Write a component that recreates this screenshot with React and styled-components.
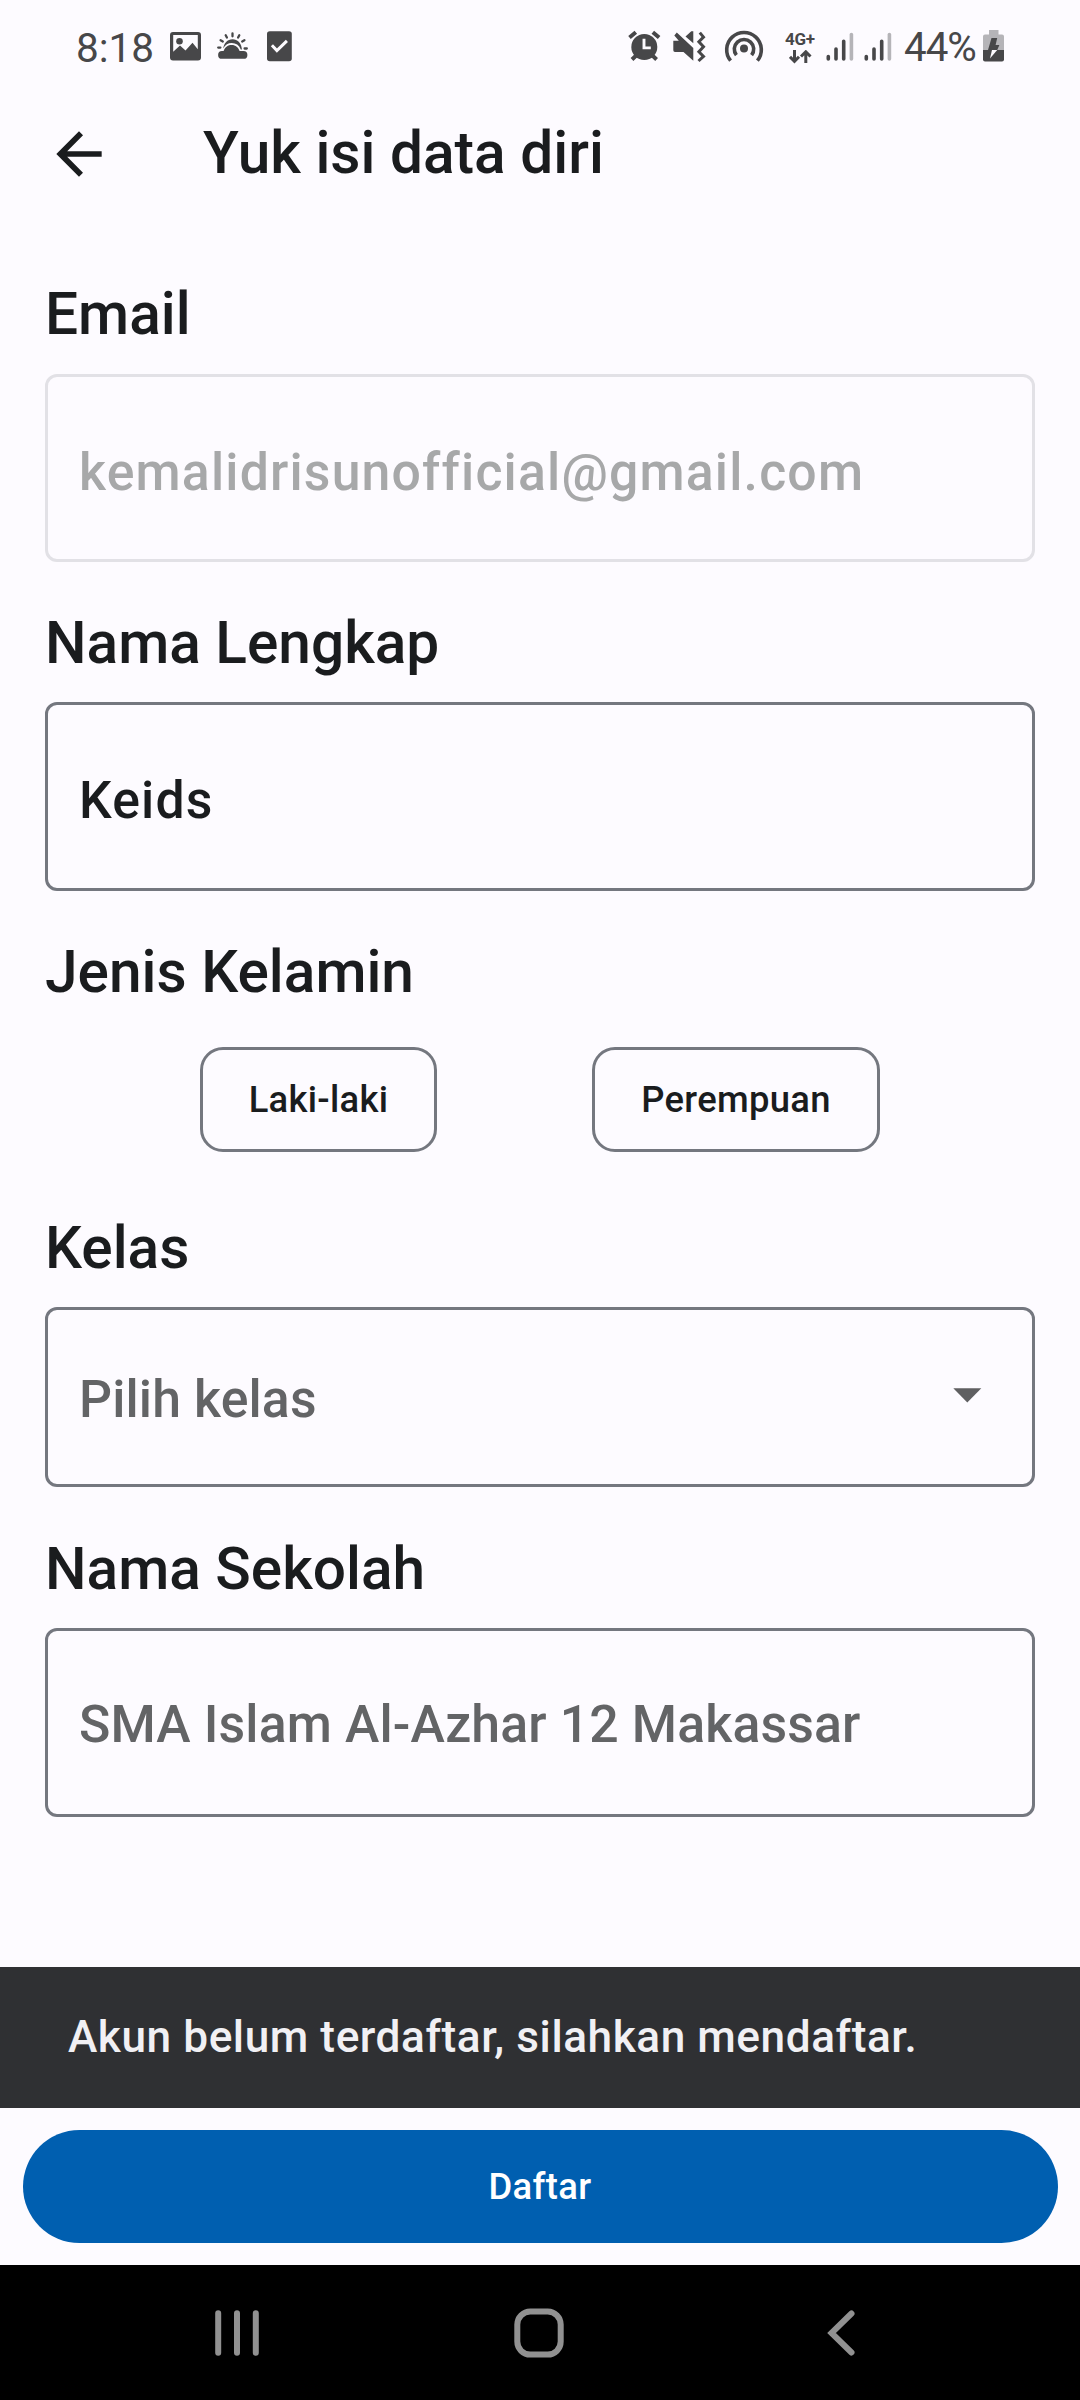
import React from "react";
import styled, { createGlobalStyle } from "styled-components";

const ink = "#1a1c1e";
const outline = "#74777f";
const statusInk = "#474749";

const GlobalStyle = createGlobalStyle`
  html, body { margin: 0; padding: 0; background: #fdfbff; }
  * { box-sizing: border-box; }
`;

const Screen = styled.div`
  width: 1080px;
  height: 2400px;
  display: flex;
  flex-direction: column;
  overflow: hidden;
  background: #fdfbff;
  color: ${ink};
  font-family: Roboto, "Liberation Sans", sans-serif;
  font-weight: 500;
`;

const StatusBar = styled.header`
  height: 92px;
  padding: 0 75px 0 76px;
  display: flex;
  justify-content: space-between;
  color: ${statusInk};
  font-weight: 400;
`;

const StatusGroup = styled.div`
  display: flex;
  align-items: flex-start;
`;

const StatusText = styled.span`
  width: ${(p) => p.$width}px;
  margin-left: ${(p) => p.$gap || 0}px;
  padding-top: 25px;
  font-size: ${(p) => p.$size}px;
  line-height: 46px;
  white-space: nowrap;
  letter-spacing: ${(p) => p.$spacing || 0}px;
`;

const StatusIcon = styled.svg`
  flex: none;
  display: block;
  height: 40px;
  margin-top: 26px;
  margin-left: ${(p) => p.$gap || 0}px;
`;

const Network = styled.div`
  width: 32px;
  margin: 31px 0 0 20px;
  display: flex;
  flex-direction: column;
  align-items: flex-start;
`;

const NetworkLabel = styled.span`
  font-size: 17px;
  line-height: 17px;
  font-weight: 700;
  letter-spacing: -0.3px;
  white-space: nowrap;
`;

const NetworkArrows = styled.svg`
  display: block;
  margin: 2px 0 0 4px;
`;

const TopBar = styled.div`
  height: 124px;
  padding: 0 45px;
  display: flex;
  align-items: center;
`;

const BackIcon = styled.svg`
  display: block;
  width: 68px;
  height: 68px;
`;

const Title = styled.h1`
  margin: 0 0 2px 90px;
  font-size: 58.6px;
  line-height: 70px;
  font-weight: 500;
  white-space: nowrap;
`;

const Form = styled.main`
  flex: none;
  height: 1751px;
  padding: 63px 45px 0;
`;

const Label = styled.h2`
  margin: 0 0 ${(p) => p.$below || 24}px;
  font-size: 58.6px;
  line-height: 70px;
  font-weight: 500;
  white-space: nowrap;
`;

const Field = styled.div`
  height: ${(p) => p.$height || 189}px;
  margin-bottom: ${(p) => p.$after || 46}px;
  padding: ${(p) => p.$drop || 9}px 44px 0 31px;
  display: flex;
  align-items: center;
  justify-content: space-between;
  border: 3px solid ${(p) => (p.$disabled ? "#e2e1e6" : outline)};
  border-radius: 12px;
  color: ${(p) => (p.$disabled ? "#a7a8a9" : p.$muted ? "#636466" : ink)};
  font-size: 51.75px;
  line-height: 70px;
  letter-spacing: ${(p) => (p.$muted ? 0.14 : 1.18)}px;
  white-space: nowrap;
`;

const Caret = styled.svg`
  display: block;
  width: 40px;
  height: 16px;
  margin-top: -8px;
`;

const ChipRow = styled.div`
  display: flex;
  gap: 155px;
  padding-left: 155px;
  margin-bottom: 61px;
`;

const Chip = styled.button`
  width: ${(p) => p.$width}px;
  height: 105px;
  margin: 0;
  padding: 0;
  border: 3px solid ${outline};
  border-radius: 23px;
  background: transparent;
  color: ${ink};
  font: 500 36.4px/46px Roboto, "Liberation Sans", sans-serif;
  letter-spacing: 0.3px;
`;

const Snackbar = styled.div`
  height: 141px;
  padding: 0 68px 2px;
  display: flex;
  align-items: center;
  background: #2f3033;
  color: #f1f0f4;
  font-size: 44.2px;
  line-height: 60px;
  letter-spacing: 0.55px;
  white-space: nowrap;
`;

const Footer = styled.div`
  height: 157px;
  padding: 22px 22.5px 0;
`;

const Submit = styled.button`
  display: block;
  width: 100%;
  height: 113px;
  border: 0;
  border-radius: 57px;
  background: #005fb0;
  color: #fff;
  font: 500 36.4px/46px Roboto, "Liberation Sans", sans-serif;
  letter-spacing: 0.4px;
`;

const NavBar = styled.nav`
  height: 135px;
  padding: 0 213px 0 206px;
  display: flex;
  align-items: center;
  justify-content: space-between;
  background: #000;
`;

const NavIcon = styled.svg`
  display: block;
  flex: none;
  fill: none;
  stroke: #919191;
`;

const SignalIcon = ({ gap }) => (
  <StatusIcon $gap={gap} width="28" viewBox="0 0 28 40" fill="none" strokeWidth="3.6" strokeLinecap="round">
    <path d="M2.3 30.6v2.3M10 23v9.9M17.7 15.3v17.6" stroke={statusInk} />
    <path d="M25.4 8.6v24.3" stroke="#b5b4b8" />
  </StatusIcon>
);

export default function App() {
  return (
    <Screen>
      <GlobalStyle />
      <StatusBar>
        <StatusGroup>
          <StatusText $width={77} $size={40.5}>8:18</StatusText>
          <StatusIcon $gap={17} width="31" viewBox="0 0 31 40">
            <path
              fillRule="evenodd"
              fill={statusInk}
              d="M3 6h25q3 0 3 3v22.500q0 3-3 3H3q-3 0-3-3V9q0-3 3-3zM3.200 9v16.800L10 19.500l5.500 5 7-7.800 5.300 6.500V9z"
            />
            <circle cx="9.500" cy="15.300" r="3.300" fill={statusInk} />
          </StatusIcon>
          <StatusIcon $gap={16} width="31" viewBox="0 0 31 40" fill={statusInk}>
            <path d="M5 32.800a3.900 3.900 0 0 1 0-7.800h1.600c1.600-4.300 4.400-6 8.100-6 4 0 6.600 2.400 7.900 6h3.900a3.900 3.900 0 0 1 0 7.800z" />
            <path d="M6.200 22.600c.6-5.200 4.200-9.300 9.400-9.300 5 0 8.300 3.500 9.100 8.700l.2 1.400h-1.100c-1.800-4.200-4.800-6.300-9-6.300-3.700 0-6.500 1.700-8.600 5.500z" />
            <path d="M15.500 7.500v2.800M8.700 9.200l1.200 2.300M22.300 9.200l-1.200 2.300M3.600 14.200l2.200 1.300M27.400 14.200l-2.200 1.300M1.200 21.600h2.200M27.600 22.500h2.200" stroke={statusInk} strokeWidth="2.300" strokeLinecap="round" />
          </StatusIcon>
          <StatusIcon $gap={19} width="25" viewBox="0 0 25 40">
            <rect x="0" y="5.300" width="24.800" height="30" rx="2.800" fill={statusInk} />
            <path d="M4.900 19.300l5 5.300 10-9.700" fill="none" stroke="#fdfbff" strokeWidth="3" />
          </StatusIcon>
        </StatusGroup>
        <StatusGroup>
          <StatusIcon width="33" viewBox="0 0 33 40" fill="none" stroke={statusInk} strokeWidth="4">
            <circle cx="16.300" cy="21" r="13" fill={statusInk} stroke="none" />
            <path d="M1.500 11.500l6.300-5.200M31.100 11.500l-6.300-5.200M8.200 29.500l-4.200 4M24.400 29.500l4.200 4" />
            <path d="M16 12.800v9.100h6.800" stroke="#fdfbff" strokeWidth="2.900" />
          </StatusIcon>
          <StatusIcon $gap={12} width="33" viewBox="0 0 33 40">
            <path d="M.3 14.800h5.500L1.300 9.500l2.500-3L20.300 22v12.800L10.500 26H2Q.3 26 .3 24.300zM12.500 10.400L18.300 5.300h2v11.900z" fill={statusInk} />
            <path d="M25.500 35l5-4.600-4.600-4.700 4.600-5-4.600-4.900 4.600-4.700-3.700-4.500" fill="none" stroke={statusInk} strokeWidth="3" />
          </StatusIcon>
          <StatusIcon $gap={17} width="42" viewBox="0 0 42 40" fill="none" stroke={statusInk} strokeWidth="3.600">
            <circle cx="21" cy="22.400" r="4" fill={statusInk} stroke="none" />
            <path d="M7.600 34.700a17.300 17.300 0 1 1 26.800 0" />
            <path d="M13.400 29.200a9.700 9.700 0 1 1 15.200 0" />
          </StatusIcon>
          <Network>
            <NetworkLabel>4G+</NetworkLabel>
            <NetworkArrows width="23" height="14" viewBox="0 0 23 14" fill="none" stroke={statusInk} strokeWidth="3">
              <path d="M5.500 0v11M1 6.800l4.500 4.500L10 6.800M16.800 13V2M12 6.500L16.800 1.800l4.700 4.700" />
            </NetworkArrows>
          </Network>
          <SignalIcon gap={9} />
          <SignalIcon gap={10} />
          <StatusText $gap={12} $width={74} $size={40.3} $spacing={-1}>44%</StatusText>
          <StatusIcon $gap={5} width="22" viewBox="0 0 22 40">
            <path d="M6 4h9.500v4.600H19q2 0 2 2V24H0V10.600q0-2 2-2h4z" fill="#b5b4b8" />
            <path d="M0 24h21v9.500q0 2-2 2H2q-2 0-2-2z" fill={statusInk} />
            <path d="M8.500 12h5.700l-1.600 7h3.800l-2.200 5H5z" fill={statusInk} />
            <path d="M9 24h5.200L7 32.500z" fill="#fdfbff" />
          </StatusIcon>
        </StatusGroup>
      </StatusBar>
      <TopBar>
        <BackIcon viewBox="0 0 24 24" fill={ink}>
          <path d="M20 11H7.830l5.590-5.590L12 4l-8 8 8 8 1.410-1.410L7.830 13H20v-2z" />
        </BackIcon>
        <Title>Yuk isi data diri</Title>
      </TopBar>
      <Form>
        <Label $below={25}>Email</Label>
        <Field $disabled $height={188}>kemalidrisunofficial@gmail.com</Field>
        <Label>Nama Lengkap</Label>
        <Field>Keids</Field>
        <Label $below={40}>Jenis Kelamin</Label>
        <ChipRow>
          <Chip $width={237}>Laki-laki</Chip>
          <Chip $width={288}>Perempuan</Chip>
        </ChipRow>
        <Label>Kelas</Label>
        <Field $muted $height={180} $after={47} $drop={6}>
          Pilih kelas
          <Caret viewBox="0 0 40 16">
            <path d="M5.300 .3h28L19.300 14.500z" fill="#5f5f61" />
          </Caret>
        </Field>
        <Label>Nama Sekolah</Label>
        <Field $muted $drop={4}>SMA Islam Al-Azhar 12 Makassar</Field>
      </Form>
      <Snackbar>Akun belum terdaftar, silahkan mendaftar.</Snackbar>
      <Footer>
        <Submit>Daftar</Submit>
      </Footer>
      <NavBar>
        <NavIcon width="64" height="64" viewBox="0 0 64 64" strokeWidth="6" strokeLinecap="round">
          <path d="M12.200 12.200v39.600M31 12.200v39.600M49.800 12.200v39.600" />
        </NavIcon>
        <NavIcon width="64" height="64" viewBox="0 0 64 64" strokeWidth="6">
          <rect x="12.300" y="10.600" width="43.400" height="43" rx="13" />
        </NavIcon>
        <NavIcon width="64" height="64" viewBox="0 0 64 64" strokeWidth="6" strokeLinecap="round">
          <path d="M48.500 12.500L28.500 32l20 19.500" />
        </NavIcon>
      </NavBar>
    </Screen>
  );
}
